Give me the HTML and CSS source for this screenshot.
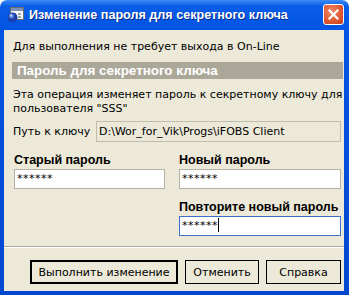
FILE: index.html
```html
<!DOCTYPE html>
<html lang="ru">
<head>
<meta charset="UTF-8" />
<title>Изменение пароля для секретного ключа</title>
<link rel="stylesheet" href="styles.css">
</head>
<body>

<div class="window">
  <div class="titlebar">
    <svg class="app-icon" width="17" height="16" viewBox="0 0 17 16">
      <rect x="3.5" y="0.5" width="13" height="12" fill="#f4f4f4" stroke="#6b6b6b"/>
      <rect x="4" y="1" width="12" height="3" fill="#7a8fb5"/>
      <rect x="6" y="6" width="3" height="2" fill="#9aa"/>
      <rect x="11" y="6" width="3" height="2" fill="#9aa"/>
      <rect x="11" y="9" width="3" height="2" fill="#9aa"/>
      <circle cx="5.5" cy="10.5" r="5" fill="#1a3fa8"/>
      <circle cx="4.5" cy="9" r="2.5" fill="#5b86e0"/>
      <circle cx="4" cy="8.5" r="1" fill="#c8d8ff"/>
    </svg>
    <span class="title">Изменение пароля для секретного ключа</span>
    <button class="close-btn" aria-label="Закрыть">
      <svg width="11" height="11" viewBox="0 0 11 11">
        <path d="M1.5 1.5 L9.5 9.5 M9.5 1.5 L1.5 9.5" stroke="#fff" stroke-width="2.2" stroke-linecap="square"/>
      </svg>
    </button>
  </div>

  <div class="client">
    <p class="note">Для выполнения не требует выхода в On-Line</p>
    <div class="band">Пароль для секретного ключа</div>
    <p class="desc">Эта операция изменяет пароль к секретному ключу для пользователя "SSS"</p>

    <div class="path-row">
      <span class="path-label">Путь к ключу</span>
      <div class="path-field">D:\Wor_for_Vik\Progs\iFOBS Client</div>
    </div>

    <div class="fields">
      <div class="field field-old">
        <label>Старый пароль</label>
        <div class="input">******</div>
      </div>
      <div class="field field-new">
        <label>Новый пароль</label>
        <div class="input">******</div>
      </div>
      <div class="field field-repeat">
        <label>Повторите новый пароль</label>
        <div class="input focused">******<span class="caret"></span></div>
      </div>
    </div>

    <div class="separator"></div>

    <div class="buttons">
      <button class="btn btn-default">Выполнить изменение</button>
      <button class="btn btn-cancel">Отменить</button>
      <button class="btn btn-help">Справка</button>
    </div>
  </div>
</div>

</body>
</html>
```

FILE: styles.css
```css
/* Reset and base */
* {
  box-sizing: border-box;
  margin: 0;
  padding: 0;
}
body {
  background: #ffffff;
  font-family: 'DejaVu Sans', Verdana, sans-serif;
  font-size: 11px;
  color: #000000;
}

/* Window frame */
.window {
  width: 349px;
  height: 295px;
  display: flex;
  flex-direction: column;
  padding: 0 5px 4px 4px;
  border-radius: 7px 7px 0 0;
  background: linear-gradient(to bottom, #3d8cf7 0px, #0a5de8 6px, #0054e3 30px, #0047d0 100%);
}

/* Title bar */
.titlebar {
  flex: none;
  height: 30px;
  display: flex;
  align-items: center;
  padding: 0 0 1px 3px;
}
.app-icon {
  flex: none;
  margin-right: 5px;
}
.title {
  flex: 1;
  color: #ffffff;
  font-family: 'Liberation Sans', Arial, sans-serif;
  font-weight: bold;
  font-size: 12.6px;
  text-shadow: 1px 1px 0 #0a2a8a;
  white-space: nowrap;
  overflow: hidden;
}
.close-btn {
  flex: none;
  width: 21px;
  height: 21px;
  border: 1px solid #ffffff;
  border-radius: 3px;
  background: radial-gradient(circle at 40% 35%, #f08a6a 0%, #e25a32 55%, #c23e1c 100%);
  display: flex;
  align-items: center;
  justify-content: center;
}

/* Client area */
.client {
  flex: 1;
  min-height: 0;
  overflow: hidden;
  background: #ece9d8;
  padding-top: 10px;
  display: flex;
  flex-direction: column;
}
.note {
  padding-left: 9px;
  line-height: 14px;
}
.band {
  margin: 8px 1px 0 8px;
  height: 17px;
  line-height: 17px;
  padding-left: 5px;
  background: #aca899;
  color: #ffffff;
  font-family: 'Liberation Sans', Arial, sans-serif;
  font-weight: bold;
  font-size: 13.4px;
}
.desc {
  margin-top: 9px;
  padding: 0 0 0 9px;
  line-height: 14px;
}

/* Path to key */
.path-row {
  display: flex;
  align-items: center;
  margin-top: 5px;
  padding-left: 9px;
}
.path-label {
  width: 83px;
}
.path-field {
  width: 245px;
  height: 21px;
  line-height: 19px;
  padding-left: 2px;
  border: 1px solid #c0bcae;
  background: #ece9d8;
  white-space: nowrap;
}

/* Password fields */
.fields {
  display: grid;
  grid-template-columns: 151px 162px;
  column-gap: 14px;
  row-gap: 11px;
  margin-top: 11px;
  padding-left: 10px;
}
.field label {
  display: block;
  font-family: 'Liberation Sans', Arial, sans-serif;
  font-weight: bold;
  font-size: 12.5px;
  line-height: 15px;
  margin-bottom: 1px;
  white-space: nowrap;
}
.field-repeat {
  grid-column: 2;
}
.input {
  height: 20px;
  line-height: 18px;
  padding-left: 2px;
  border: 1px solid #b5b2a5;
  background: #ffffff;
  color: #000000;
  letter-spacing: 0.5px;
}
.input.focused {
  border-color: #3c6fc8;
}
.caret {
  display: inline-block;
  width: 1px;
  height: 14px;
  background: #000000;
  vertical-align: -3px;
}

/* Separator and buttons */
.separator {
  margin-top: 10px;
  height: 2px;
  border-top: 1px solid #aca899;
  border-bottom: 1px solid #ffffff;
}
.buttons {
  display: flex;
  justify-content: flex-end;
  gap: 7px;
  margin-top: 12px;
  padding-right: 3px;
}
.btn {
  height: 24px;
  border: 1px solid #000000;
  background: #ece9d8;
  font-family: inherit;
  font-size: 11px;
  color: #000000;
}
.btn-default {
  width: 148px;
  border-width: 2px;
}
.btn-cancel {
  width: 74px;
}
.btn-help {
  width: 75px;
}
```
